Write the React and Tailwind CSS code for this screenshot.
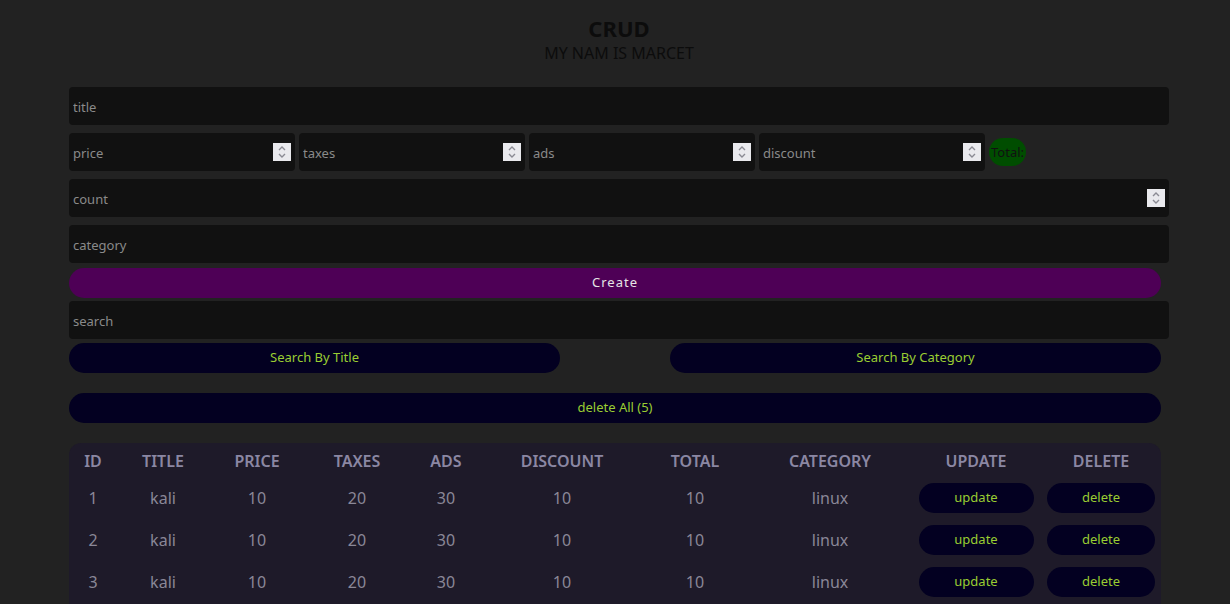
import React from 'react';

const rows = [1, 2, 3].map((id) => ({
  id,
  title: 'kali',
  price: 10,
  taxes: 20,
  ads: 30,
  discount: 10,
  total: 10,
  category: 'linux',
}));

const Spinner = () => (
  <div className="w-[18px] h-[18px] bg-[#e9e9ed] flex items-center justify-center shrink-0">
    <svg width="10" height="14" viewBox="0 0 10 14" fill="none" stroke="#8a8a93" strokeWidth="1.4">
      <path d="M2 5 L5 2 L8 5" />
      <path d="M2 9 L5 12 L8 9" />
    </svg>
  </div>
);

const Field = ({ placeholder, number, className = '' }) => (
  <div className={`h-[38px] bg-[#111111] rounded-[4px] flex items-center pl-[4px] pr-[4px] ${className}`}>
    <input
      type="text"
      placeholder={placeholder}
      className="flex-1 min-w-0 pt-[3px] bg-transparent outline-none text-[13px] text-[#bbbbbb] placeholder:text-[#8a8a8a]"
    />
    {number && <Spinner />}
  </div>
);

const NavyBtn = ({ children, className = '' }) => (
  <button className={`h-[30px] rounded-full bg-[#030021] text-[#9acd32] text-[13px] ${className}`}>
    {children}
  </button>
);

const cols = [
  ['ID', 'w-[48px]'],
  ['TITLE', 'w-[92px]'],
  ['PRICE', 'w-[96px]'],
  ['TAXES', 'w-[104px]'],
  ['ADS', 'w-[74px]'],
  ['DISCOUNT', 'w-[158px]'],
  ['TOTAL', 'w-[108px]'],
  ['CATEGORY', 'w-[162px]'],
  ['UPDATE', 'w-[130px]'],
  ['DELETE', 'w-[120px]'],
];

export default function App() {
  return (
    <div className="min-h-[604px] bg-[#222222] font-['Noto_Sans',sans-serif] overflow-hidden">
      <div className="ml-[69px] w-[1100px] pt-[14px]">
        {/* header */}
        <div className="text-center text-[#0c0c0c]">
          <h1 className="text-[22px] font-bold leading-[28px]">CRUD</h1>
          <p className="text-[16px] leading-[20px] mt-[1px]">MY NAM IS MARCET</p>
        </div>

        {/* inputs */}
        <div className="mt-[24px] flex flex-col gap-[8px]">
          <Field placeholder="title" />
          <div className="flex items-center gap-[4px]">
            <Field placeholder="price" number className="w-[226px]" />
            <Field placeholder="taxes" number className="w-[226px]" />
            <Field placeholder="ads" number className="w-[226px]" />
            <Field placeholder="discount" number className="w-[226px]" />
            <span className="h-[28px] px-[2px] rounded-full bg-[#004d00] text-[#111111] text-[13px] leading-[28px]">
              Total:
            </span>
          </div>
          <Field placeholder="count" number />
          <Field placeholder="category" />
        </div>

        <button className="mt-[5px] w-[1092px] h-[30px] rounded-full bg-[#4e0056] text-[#e6e6e6] text-[13px] tracking-[1px]">
          Create
        </button>

        <Field placeholder="search" className="mt-[3px]" />

        <div className="mt-[4px] w-[1092px] flex justify-between">
          <NavyBtn className="w-[491px]">Search By Title</NavyBtn>
          <NavyBtn className="w-[491px]">Search By Category</NavyBtn>
        </div>

        <NavyBtn className="mt-[20px] w-[1092px]">delete All (5)</NavyBtn>

        {/* table */}
        <div className="mt-[20px] w-[1092px] bg-[#1e1a29] rounded-t-[12px] pb-[20px]">
          <table className="w-full table-fixed border-collapse text-center">
            <thead>
              <tr className="h-[34px]">
                {cols.map(([name, w]) => (
                  <th key={name} className={`${w} pt-[1px] text-[16px] font-semibold text-[#8b87a3]`}>
                    {name}
                  </th>
                ))}
              </tr>
            </thead>
            <tbody>
              {rows.map((r) => (
                <tr key={r.id} className="h-[42px] text-[16px] text-[#8a8797]">
                  <td>{r.id}</td>
                  <td>{r.title}</td>
                  <td>{r.price}</td>
                  <td>{r.taxes}</td>
                  <td>{r.ads}</td>
                  <td>{r.discount}</td>
                  <td>{r.total}</td>
                  <td>{r.category}</td>
                  <td>
                    <NavyBtn className="w-[115px]">update</NavyBtn>
                  </td>
                  <td>
                    <NavyBtn className="w-[108px]">delete</NavyBtn>
                  </td>
                </tr>
              ))}
            </tbody>
          </table>
        </div>
      </div>
    </div>
  );
}
